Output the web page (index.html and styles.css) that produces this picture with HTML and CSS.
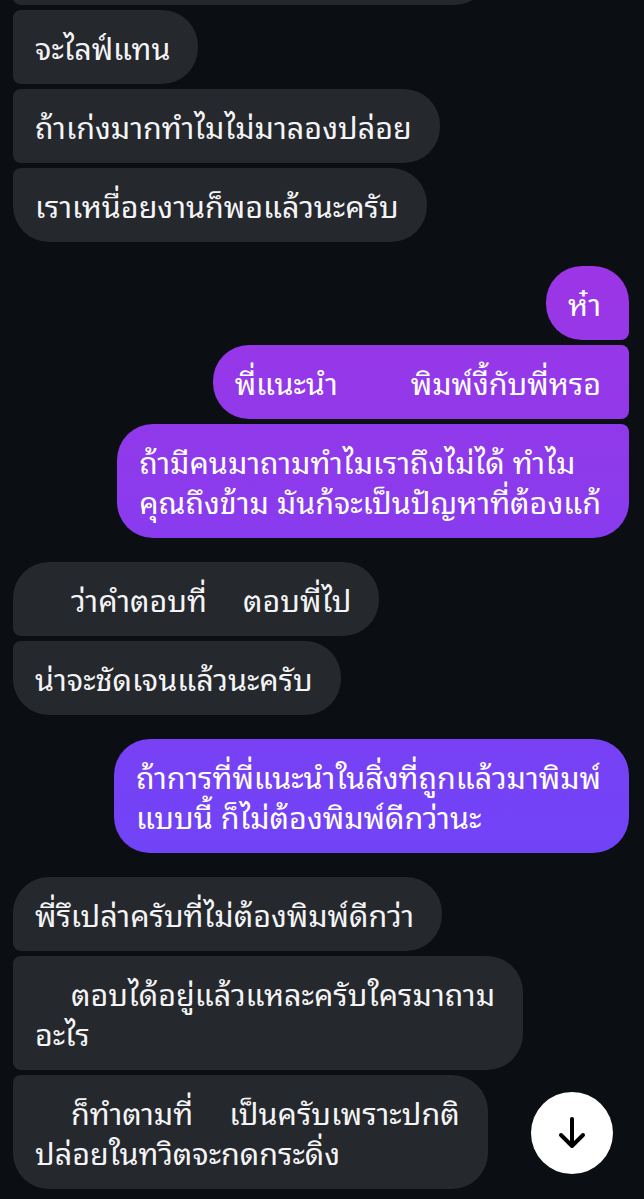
FILE: index.html
```html
<!DOCTYPE html>
<html lang="th">
<head>
<meta charset="utf-8">
<title>Chat</title>
<link rel="stylesheet" href="styles.css">
</head>
<body>
<div class="screen">
  <div class="chat">
    <div class="group in">
      <div class="bubble partial"></div>
      <div class="bubble">จะไลฟ์แทน</div>
      <div class="bubble">ถ้าเก่งมากทำไมไม่มาลองปล่อย</div>
      <div class="bubble">เราเหนื่อยงานก็พอแล้วนะครับ</div>
    </div>
    <div class="group out">
      <div class="bubble">ห๋า</div>
      <div class="bubble">พี่แนะนำ<span class="gap wide"></span>พิมพ์งี้กับพี่หรอ</div>
      <div class="bubble">ถ้ามีคนมาถามทำไมเราถึงไม่ได้ ทำไม<br>คุณถึงข้าม มันก้จะเป็นปัญหาที่ต้องแก้</div>
    </div>
    <div class="group in">
      <div class="bubble"><span class="gap"></span>ว่าคำตอบที่<span class="gap"></span>ตอบพี่ไป</div>
      <div class="bubble">น่าจะชัดเจนแล้วนะครับ</div>
    </div>
    <div class="group out">
      <div class="bubble">ถ้าการที่พี่แนะนำในสิ่งที่ถูกแล้วมาพิมพ์<br>แบบนี้ ก็ไม่ต้องพิมพ์ดีกว่านะ</div>
    </div>
    <div class="group in">
      <div class="bubble">พี่รึเปล่าครับที่ไม่ต้องพิมพ์ดีกว่า</div>
      <div class="bubble"><span class="gap"></span>ตอบได้อยู่แล้วแหละครับใครมาถาม<br>อะไร</div>
      <div class="bubble"><span class="gap"></span>ก็ทำตามที่<span class="gap"></span>เป็นครับเพราะปกติ<br>ปล่อยในทวิตจะกดกระดิ่ง</div>
    </div>
  </div>
  <button class="scroll-down" aria-label="เลื่อนลง">
    <svg viewBox="0 0 40 40" width="40" height="40" aria-hidden="true">
      <path d="M20 6 V33 M9 22 L20 33 L31 22" fill="none" stroke="#000" stroke-width="4" stroke-linecap="round" stroke-linejoin="round"/>
    </svg>
  </button>
</div>
</body>
</html>
```
FILE: styles.css
```css
* { box-sizing: border-box; }
html, body {
  margin: 0;
  padding: 0;
  background: #0b0e12;
}
.screen {
  position: relative;
  width: 644px;
  height: 1199px;
  overflow: hidden;
  background: #0b0e12;
  font-family: "Noto Sans Thai Looped", "Noto Sans Thai", "Noto Sans", sans-serif;
  color: #f4f4f6;
}
.chat {
  display: flex;
  flex-direction: column;
  gap: 24px;
  margin-top: -69px;
  padding: 0 15px 0 13px;
}
.group {
  display: flex;
  flex-direction: column;
  gap: 5px;
}
.group.in { align-items: flex-start; }
.group.out { align-items: flex-end; }
.bubble {
  white-space: nowrap;
  font-size: 30.5px;
  line-height: 40px;
  padding: 17px 28px 17px 22px;
  border-radius: 36px;
}
.in .bubble {
  background: #25282c;
  border-top-left-radius: 8px;
  border-bottom-left-radius: 8px;
}
.in .bubble:first-child { border-top-left-radius: 36px; }
.in .bubble:last-child { border-bottom-left-radius: 36px; }
.in .bubble.partial { width: 477px; height: 74px; border-top-left-radius: 8px; }
.out .bubble {
  background: linear-gradient(180deg, #b02fdc 0px, #9a36e6 300px, #7442f6 800px, #5a4cff 1199px) fixed;
  color: #fff;
  border-top-right-radius: 8px;
  border-bottom-right-radius: 8px;
}
.out .bubble:first-child { border-top-right-radius: 36px; }
.out .bubble:last-child { border-bottom-right-radius: 36px; }
.gap {
  display: inline-block;
  width: 36px;
}
.gap.wide { width: 73px; }
.scroll-down {
  position: absolute;
  left: 531px;
  top: 1092px;
  width: 82px;
  height: 82px;
  border: none;
  border-radius: 50%;
  background: #ffffff;
  padding: 0;
  display: flex;
  align-items: center;
  justify-content: center;
}
```
